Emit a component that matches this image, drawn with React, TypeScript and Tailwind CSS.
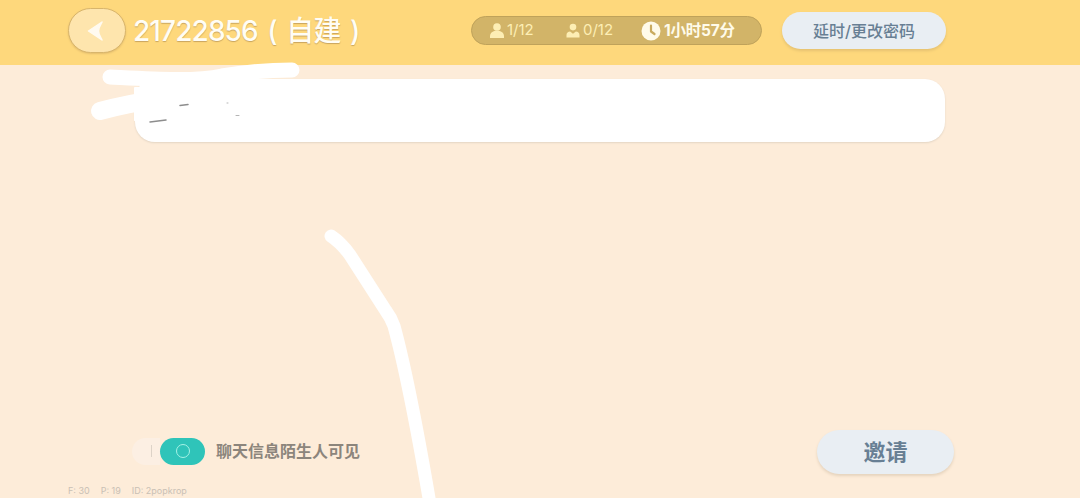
const cjk = "font-['Inter','Noto_Sans_CJK_SC',sans-serif]";

function BackArrow() {
  return (
    <svg viewBox="0 0 18 22" className="h-[22px] w-[18px]" fill="#fffaf0" stroke="#fffaf0" strokeWidth="1.500" strokeLinejoin="round">
      <path d="M1.500 11 15 2c-1 2-3.500 5-3.500 9s2.500 7 3.500 9z" />
    </svg>
  );
}

function PersonIcon({ badge }: { badge?: boolean }) {
  return (
    <svg viewBox="0 0 16 16" className="h-[17px] w-[16px]" fill="#fdeeb4">
      <circle cx="8" cy={badge ? 4.600 : 4.500} r={badge ? 3.300 : 3.800} />
      {badge ? (
        <path d="M1.500 15v-2.600c0-2 1.600-3.400 3.600-3.400l2.900 2.200L10.900 9c2 0 3.600 1.400 3.600 3.400V15z" />
      ) : (
        <path d="M1 15.500v-2.300C1 10.600 3.400 8.800 6 8.200h4c2.600.6 5 2.400 5 5v2.300z" />
      )}
    </svg>
  );
}

function ClockIcon() {
  return (
    <svg viewBox="0 0 20 20" className="h-[20px] w-[20px]">
      <circle cx="10" cy="10" r="9.500" fill="#fffbea" />
      <path d="M10 4.500v6l3.500 2.500" fill="none" stroke="#c9ab5f" strokeWidth="2.200" strokeLinecap="round" strokeLinejoin="round" />
    </svg>
  );
}

export default function App() {
  return (
    <div className={`relative flex h-[498px] w-[1080px] flex-col overflow-hidden bg-[#fdecd9] ${cjk}`}>
      {/* 顶部栏 */}
      <header className="flex h-[65px] shrink-0 items-center bg-[#fed87c] pb-[4px] pl-[68px] pr-[134px]">
        <button className="flex h-[45px] w-[58px] items-center justify-center rounded-full border border-[#d8b56c] bg-[#fee5ad] pr-[2px] shadow-[0_1px_2px_#e3bd6e]">
          <BackArrow />
        </button>
        <h1 className="ml-[7px] whitespace-pre text-[28px] font-medium tracking-[-0.9px] text-[#fffdf5] [text-shadow:0_1px_1px_#c9a55f] [word-spacing:3px]">
          21722856 ( 自建 )
        </h1>
        <div className="ml-auto flex h-[29px] w-[291px] items-center rounded-full border border-[#bfa25a] bg-[#d2b468] pl-[17px] text-[15px] text-[#fdeeb4]">
          <span className="flex w-[76px] items-center gap-[2px]">
            <PersonIcon />
            1/12
          </span>
          <span className="flex w-[76px] items-center gap-[2px]">
            <PersonIcon badge />
            0/12
          </span>
          <span className="flex items-center gap-[3px] text-[15.500px] font-bold tracking-[-0.2px] text-[#fffbea]">
            <ClockIcon />
            1小时57分
          </span>
        </div>
        <button className="ml-5 h-[37px] w-[164px] rounded-full bg-[#e9eef3] text-[16px] font-medium text-[#687f94] shadow-[0_2px_3px_#e6c271]">
          延时/更改密码
        </button>
      </header>

      {/* 内容区 */}
      <main className="flex flex-1 flex-col pl-[135px] pr-[135px] pt-[14px]">
        <div className="h-[63px] rounded-[20px] bg-white shadow-[0_1px_2px_#e3d5c4]" />
        <div className="mt-auto flex items-center pb-[24px]">
          <div className="mb-[2px] ml-[-3px] flex h-[27px] w-[28px] items-center justify-end rounded-l-full bg-[#fcefe3] pr-[8px]">
            <span className="h-[12px] w-px bg-[#ddd3c8]" />
          </div>
          <div className="mb-[2px] flex h-[27px] w-[45px] items-center justify-center rounded-full bg-[#2fc4b9]">
            <span className="h-[14px] w-[14px] rounded-full border border-[#a6f2e6]" />
          </div>
          <span className="mb-[2px] ml-[11px] text-[16px] font-bold text-[#8c857c]">聊天信息陌生人可见</span>
          <button className="ml-auto mr-[-9px] h-[44px] w-[137px] rounded-full bg-[#e9eef3] text-[22px] font-bold text-[#687f94] shadow-[0_2px_3px_#e5d3bd]">
            邀请
          </button>
        </div>
      </main>

      {/* 调试信息 */}
      <div className="absolute bottom-0 left-[68px] flex h-[14px] items-center gap-[11px] text-[9px] text-[#c9c0b5]">
        <span>F: 30</span>
        <span>P: 19</span>
        <span>ID: 2popkrop</span>
      </div>

      {/* 手绘涂抹 */}
      <svg className="pointer-events-none absolute inset-0" width="1080" height="498" fill="none" stroke="#ffffff" strokeLinecap="round" strokeLinejoin="round">
        <path d="M110 77c40 2 85 5 112-1 24-4 45-6 70-6" strokeWidth="15" />
        <path d="M100 111c30-8 70-16 130-18" strokeWidth="18" />
        <path d="M135 88h110v30h-96l-14 2z" fill="#ffffff" strokeWidth="2" />
        <path d="M331 236c9 6 14 12 19 19l36 56c3 4 6 9 8 15 12 44 24 108 35 172" strokeWidth="13" />
        <path d="M180 105.500l8-1M150 122l16-2" stroke="#8d8d8d" strokeWidth="1.500" />
        <path d="M236 115.500h3M227 103h1" stroke="#b5b5b5" strokeWidth="1" />
      </svg>
    </div>
  );
}
